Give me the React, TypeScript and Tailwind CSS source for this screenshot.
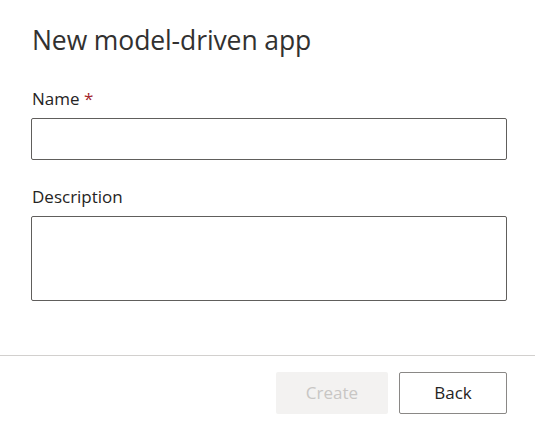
export default function App() {
  return (
    <div className="w-[535px] h-[431px] bg-white text-[#323130] font-['Open_Sans',sans-serif] flex flex-col">
      <div className="px-8 pt-[22px] flex-1">
        <h1 className="text-[26.5px] leading-[36px] font-normal tracking-[-0.1px]">New model-driven app</h1>
        <div className="mt-[30px]">
          <label className="block text-[17px] leading-[22px] font-medium text-[#252423]">
            Name <span className="text-[#a4262c]">*</span>
          </label>
          <input
            type="text"
            className="mt-[8px] w-[476px] -ml-px h-[42px] border border-[#605e5c] rounded-[2px] px-2 outline-none"
          />
        </div>
        <div className="mt-[26px]">
          <label className="block text-[17px] leading-[22px] font-medium text-[#252423]">Description</label>
          <textarea
            className="mt-[8px] block w-[476px] -ml-px h-[85px] border border-[#605e5c] rounded-[2px] px-2 outline-none resize-none"
          />
        </div>
      </div>
      <div className="border-t border-[#d2d0ce] h-[76px] flex items-start justify-end gap-[11px] pt-[16px] pr-[28px]">
        <button
          disabled
          className="w-[112px] h-[42px] rounded-[2px] bg-[#f3f2f1] text-[#c8c6c4] text-[17px] font-medium"
        >
          Create
        </button>
        <button className="w-[108px] h-[42px] rounded-[2px] border border-[#8a8886] bg-white text-[#252423] text-[17px] font-medium">
          Back
        </button>
      </div>
    </div>
  );
}
